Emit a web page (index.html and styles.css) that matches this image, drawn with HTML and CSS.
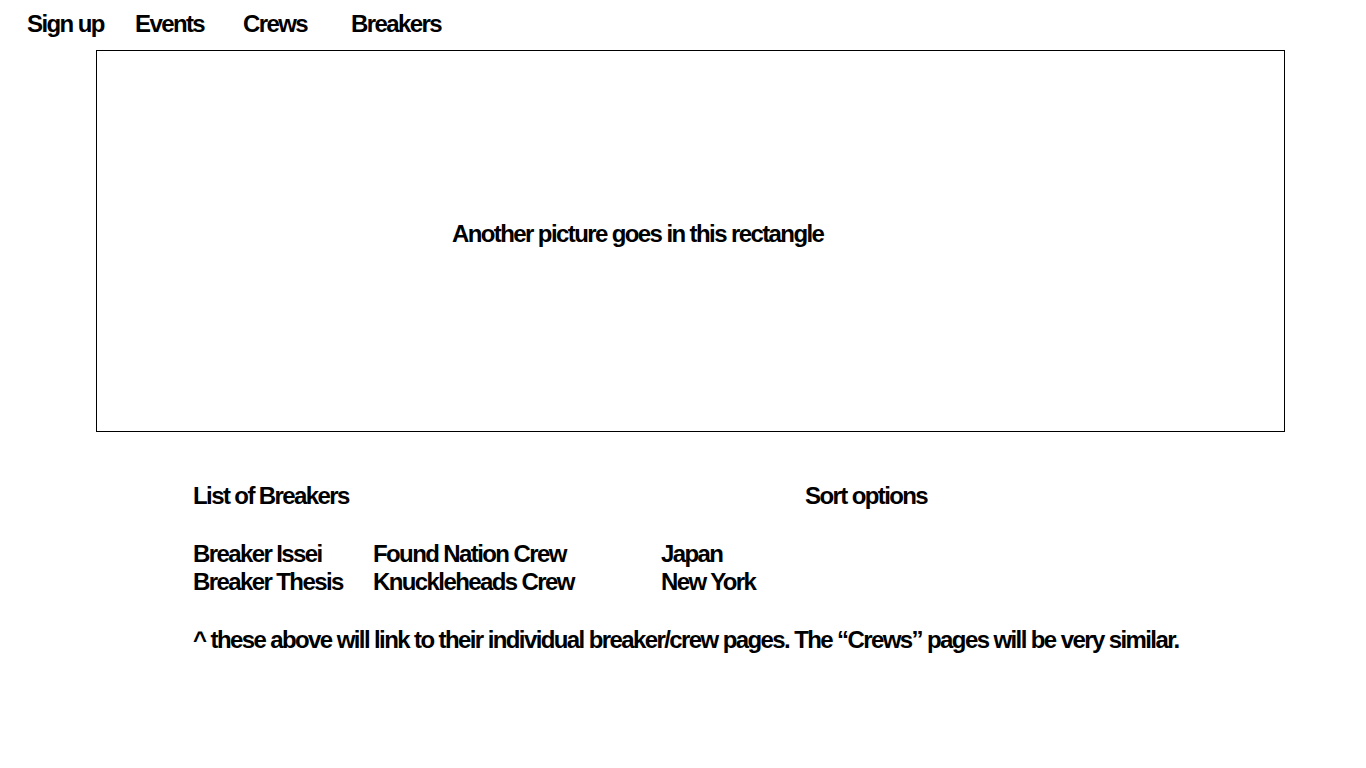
FILE: index.html
```html
<!DOCTYPE html>
<html lang="en">
<head>
<meta charset="utf-8">
<title>Breakers</title>
<link rel="stylesheet" href="styles.css">
</head>
<body>
<nav class="nav">
  <a class="nav-link" href="#">Sign up</a>
  <a class="nav-link" href="#">Events</a>
  <a class="nav-link" href="#">Crews</a>
  <a class="nav-link" href="#">Breakers</a>
</nav>
<div class="hero">
  <p class="hero-text">Another picture goes in this rectangle</p>
</div>
<section class="list">
  <div class="list-head">
    <span class="col-title">List of Breakers</span>
    <span class="col-sort">Sort options</span>
  </div>
  <div class="blank"></div>
  <div class="rows">
    <a class="cell c1" href="#">Breaker Issei</a>
    <a class="cell c2" href="#">Found Nation Crew</a>
    <span class="cell c3">Japan</span>
    <a class="cell c1" href="#">Breaker Thesis</a>
    <a class="cell c2" href="#">Knuckleheads Crew</a>
    <span class="cell c3">New York</span>
  </div>
  <div class="blank"></div>
  <p class="note">^ these above will link to their individual breaker/crew pages. The “Crews” pages will be very similar.</p>
</section>
</body>
</html>
```
FILE: styles.css
```css
html, body {
  margin: 0;
  padding: 0;
  background: #fff;
}
body {
  font-family: "Liberation Sans", Arial, sans-serif;
  font-weight: bold;
  font-size: 24px;
  letter-spacing: -1.6px;
  color: #000;
}
a {
  color: #000;
  text-decoration: none;
}
.nav {
  display: flex;
  padding-left: 27px;
  height: 50px;
  align-items: center;
}
.nav-link {
  width: 108px;
  line-height: 48px;
  margin-top: -2px;
}
.hero {
  margin-left: 96px;
  width: 1187px;
  height: 380px;
  border: 1px solid #000;
  display: flex;
  align-items: center;
}
.hero-text {
  margin: 0;
  padding-left: 355px;
  margin-top: -14px;
}
.list {
  padding-left: 193px;
  padding-top: 50px;
  line-height: 28.8px;
}
.list-head {
  display: grid;
  grid-template-columns: 612px auto;
}
.blank {
  height: 28.8px;
}
.rows {
  display: grid;
  grid-template-columns: 180px 288px auto;
}
.note {
  margin: 0;
}
```
